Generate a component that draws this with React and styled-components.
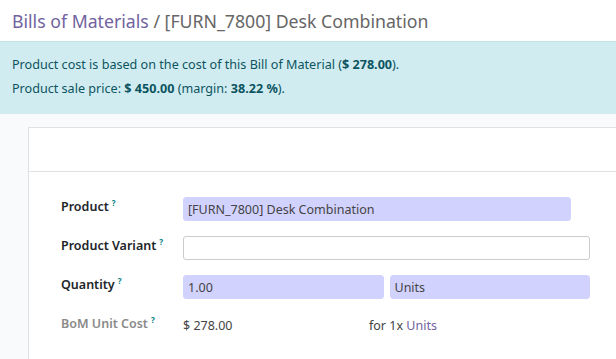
import React from 'react'
import styled, { createGlobalStyle } from 'styled-components'

const Global = createGlobalStyle`
  body {
    margin: 0;
    background: #f9fafb;
    font-family: "Noto Sans", "Open Sans", sans-serif;
  }
`

const Page = styled.div`
  width: 616px;
  height: 359px;
  overflow: hidden;
  background: #f9fafb;
`

const Header = styled.div`
  height: 41px;
  background: #fff;
  padding: 0 12px;
  display: flex;
  align-items: center;
  font-size: 17.7px;
  color: #666;
  white-space: nowrap;
  span { color: #71639e; }
`

const Alert = styled.div`
  height: 73px;
  box-sizing: border-box;
  background: #d1ecf1;
  border-top: 1px solid #bee5eb;
  color: #0c5460;
  font-size: 12.6px;
  padding: 14px 12px 0;
  p { margin: 0 0 7px; line-height: 17px; }
  b { font-weight: 700; }
`

const Sheet = styled.div`
  margin: 13px 0 0 28px;
  background: #fff;
  border: 1px solid #dee2e6;
  border-right: none;
  height: 260px;
`

const SheetTop = styled.div`
  height: 43px;
  border-bottom: 1px solid #dee2e6;
`

const Form = styled.div`
  padding: 25px 26px 0 32px;
  display: grid;
  grid-template-columns: 122px 1fr;
  grid-auto-rows: 39px;
`

const Label = styled.div`
  font-size: 12.5px;
  font-weight: 600;
  color: ${p => (p.$muted ? '#8a8a8a' : '#212529')};
  padding-top: 0;
  sup {
    color: #017e84;
    font-size: 8px;
    margin-left: 3px;
    font-weight: 700;
  }
`

const Cell = styled.div`
  display: flex;
  gap: 6px;
  padding-right: ${p => p.$trim || 0}px;
`

const Input = styled.div`
  flex: 1;
  height: 24px;
  box-sizing: border-box;
  border: 1px solid ${p => (p.$required ? '#d2d2ff' : '#ccc')};
  border-radius: 3px;
  background: ${p => (p.$required ? '#d2d2ff' : '#fff')};
  color: #444;
  font-size: 12.5px;
  padding: 0 4px;
  display: flex;
  align-items: center;
`

const Value = styled.div`
  width: ${p => (p.$w ? `${p.$w}px` : 'auto')};
  font-size: 12.5px;
  color: #444;
  padding-top: 3px;
  a { color: #71639e; text-decoration: none; }
`

const Help = () => <sup>?</sup>

export default function App() {
  return (
    <Page>
      <Global />
      <Header>
        <span>Bills of Materials</span>&nbsp;/ [FURN_7800] Desk Combination
      </Header>
      <Alert>
        <p>Product cost is based on the cost of this Bill of Material (<b>$ 278.00</b>).</p>
        <p>Product sale price: <b>$ 450.00</b> (margin: <b>38.22 %</b>).</p>
      </Alert>
      <Sheet>
        <SheetTop />
        <Form>
          <Label>Product<Help /></Label>
          <Cell $trim={19}>
            <Input $required>[FURN_7800] Desk Combination</Input>
          </Cell>
          <Label>Product Variant<Help /></Label>
          <Cell>
            <Input />
          </Cell>
          <Label>Quantity<Help /></Label>
          <Cell>
            <Input $required>1.00</Input>
            <Input $required>Units</Input>
          </Cell>
          <Label $muted>BoM Unit Cost<Help /></Label>
          <Cell>
            <Value $w={180}>$ 278.00</Value>
            <Value>for 1x <a href="#">Units</a></Value>
          </Cell>
        </Form>
      </Sheet>
    </Page>
  )
}
